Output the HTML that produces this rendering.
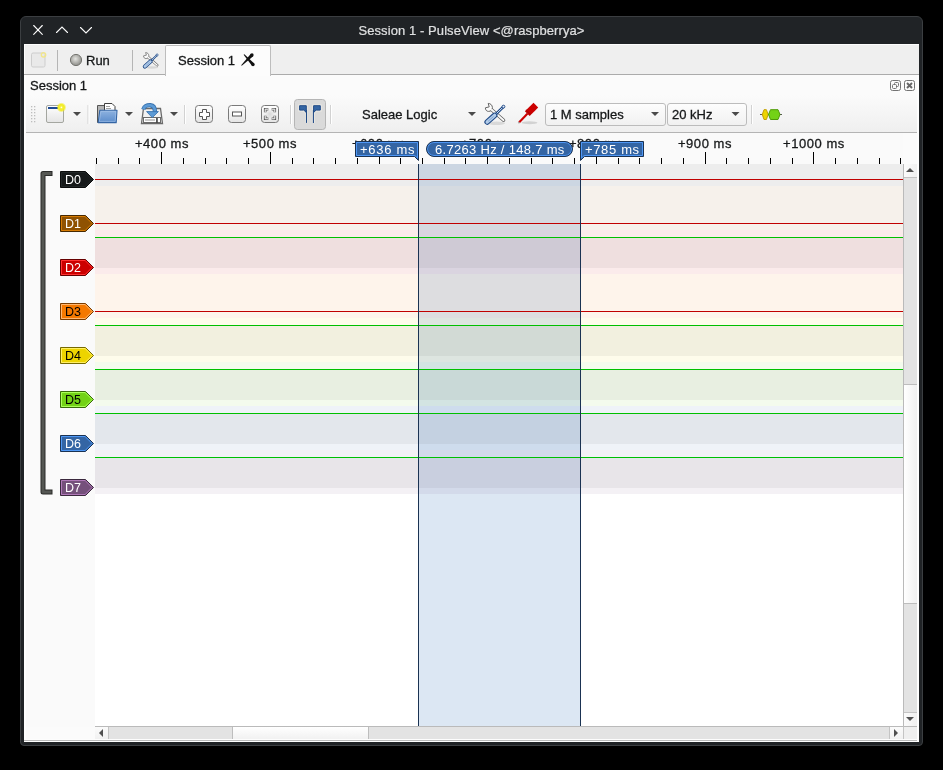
<!DOCTYPE html>
<html><head><meta charset="utf-8">
<style>
*{box-sizing:border-box}
html,body{margin:0;padding:0;width:943px;height:770px;overflow:hidden;background:#000;font-family:"Liberation Sans",sans-serif;}
.a{position:absolute;will-change:transform}
#win{left:20px;top:16px;width:903px;height:730px;background:#202326;border-radius:6px 6px 4px 4px;border:1px solid #3b3e41;}
#title{left:0px;top:22px;width:943px;text-align:center;color:#dfe0e1;font-size:13px;line-height:18px;-webkit-text-stroke:0.2px #dfe0e1;letter-spacing:0.08px}
#content{left:24px;top:44px;width:895px;height:698px;background:#fbfbfb;}
#tabbar{left:24px;top:44px;width:895px;height:31px;background:#efefef;border-bottom:1px solid #ababab;box-shadow:inset 1px 1px 0 #fdfdfd}
.sep{width:1px;background:#b5b5b5}
.t13{font-size:13px;color:#161819;line-height:16px;white-space:nowrap;-webkit-text-stroke:0.3px #161819}
#tab{left:165px;top:45px;width:106px;height:31px;background:#fcfcfc;border:1px solid #bdbdbd;border-bottom:none;border-radius:2px 2px 0 0}
#toolbar{left:26px;top:95px;width:891px;height:38px;background:linear-gradient(#fbfbfb,#efefef);border-bottom:1px solid #b4b4b4}
#ruler{left:95px;top:133px;width:808px;height:31px;background:#fafafa}
#header{left:24px;top:133px;width:71px;height:594px;background:#fafafa}
.combo{height:23px;border:1px solid #bcbcbc;border-radius:3px;background:linear-gradient(#fdfdfd,#f1f1f1)}
.rt{font-size:13px;color:#161819;letter-spacing:0.55px;white-space:nowrap;line-height:16px;-webkit-text-stroke:0.3px #161819}
.lbl{font-size:13px;color:#fff;letter-spacing:0.3px;white-space:nowrap;line-height:16px;-webkit-text-stroke:0px #fff}

</style></head><body>
<svg width="0" height="0" style="position:absolute"><defs>
<symbol id="tools" viewBox="0 0 26 26">
 <ellipse cx="14.5" cy="23.2" rx="8.5" ry="1.7" fill="#000" opacity="0.10"/>
 <path d="M8.8 9 L21.6 20.2" stroke="#5e5e5e" stroke-width="3.4" stroke-linecap="round"/>
 <path d="M8.8 9 L21.6 20.2" stroke="#fbfbfb" stroke-width="1.8" stroke-linecap="round"/>
 <path d="M3.4 7.8 L7.2 6.9 L6.2 3.4 C8.4 3.4 10.4 5.2 10.4 7.6 C10.4 10 8.6 11.4 6.6 11.4 C4.6 11.4 3.3 9.8 3.4 7.8 Z" fill="#fbfbfb" stroke="#5e5e5e" stroke-width="0.95" stroke-linejoin="round"/>
 <path d="M9.2 9.4 L10.6 10.6" stroke="#fbfbfb" stroke-width="1.9"/>
 <path d="M21.4 6.8 L13 15" stroke="#204a87" stroke-width="2.7" stroke-linecap="round"/>
 <path d="M21.4 6.8 L13 15" stroke="#d2e2f5" stroke-width="1.0" stroke-linecap="round"/>
 <circle cx="21.5" cy="6.6" r="1.4" fill="#e8f0fa" stroke="#204a87" stroke-width="0.9"/>
 <path d="M12.6 15.4 L5.2 22" stroke="#204a87" stroke-width="5.6" stroke-linecap="round"/>
 <path d="M12.6 15.4 L5.2 22" stroke="#b3cdea" stroke-width="3.4" stroke-linecap="round"/>
 <path d="M11.2 16.8 L6.6 20.8" stroke="#7aa0cf" stroke-width="0.9" stroke-linecap="round"/>
</symbol>
</defs></svg>
<div id="win" class="a"></div>
<div id="title" class="a">Session 1 - PulseView &lt;@raspberrya&gt;</div>
<svg class="a" style="left:0;top:0" width="100" height="44">
 <g stroke="#fcfcfc" stroke-width="1.1" fill="none" stroke-linecap="round">
  <path d="M33.7 25.5 L42.3 34.3 M42.3 25.5 L33.7 34.3"/>
  <path d="M56.5 32.5 L62 27 L67.5 32.5"/>
  <path d="M80.5 27.5 L86 33 L91.5 27.5"/>
 </g>
</svg>
<div id="content" class="a"></div>
<div id="tabbar" class="a"></div>
<div id="tab" class="a"></div>
<div class="a t13" style="left:178px;top:53px">Session 1</div>
<svg class="a" style="left:238px;top:50px" width="20" height="20"><g fill="#111">
<path d="M5.6 4.8 L6.4 4.2 L16.2 13.4 L13.8 15.6 Z"/><circle cx="15" cy="14.5" r="1.65"/>
<path d="M15.15 6.15 L12.85 3.85 L3.2 15.2 L3.8 15.8 Z"/><circle cx="14" cy="5" r="1.65"/>
</g></svg>
<svg class="a" style="left:30px;top:51px" width="18" height="18"><rect x="1.5" y="2" width="13.5" height="14" rx="1.5" fill="#e9e9e9" stroke="#cdcdcd"/><circle cx="13.5" cy="3.8" r="2.2" fill="none" stroke="#f2e68a" stroke-width="1.3"/></svg>
<div class="a sep" style="left:57px;top:50px;height:21px"></div>
<svg class="a" style="left:68px;top:52px" width="16" height="16"><defs><radialGradient id="rb" cx="0.45" cy="0.4" r="0.6"><stop offset="0" stop-color="#e4e4e0"/><stop offset="1" stop-color="#8c8c88"/></radialGradient></defs><circle cx="8" cy="8" r="5.6" fill="url(#rb)" stroke="#74746f" stroke-width="1"/></svg>
<div class="a t13" style="left:86px;top:53px">Run</div>
<div class="a sep" style="left:132px;top:50px;height:21px"></div>
<svg class="a" style="left:141px;top:49.5px" width="19.5" height="19.5" viewBox="0 0 26 26"><use href="#tools"/></svg>
<div class="a t13" style="left:30px;top:78px">Session 1</div>
<svg class="a" style="left:889px;top:79px" width="28" height="13">
 <rect x="1.5" y="1.5" width="10" height="10" rx="2" fill="none" stroke="#737373"/>
 <rect x="5.5" y="3.5" width="4" height="4" rx="1" fill="#fafafa" stroke="#737373"/>
 <rect x="3.5" y="5.5" width="4" height="4" rx="1" fill="#fafafa" stroke="#737373"/>
 <rect x="15.5" y="1.5" width="10" height="10" rx="2" fill="none" stroke="#737373"/>
 <path d="M18 4 L23 9 M23 4 L18 9" stroke="#666" stroke-width="1.9"/>
</svg>
<div id="toolbar" class="a"></div>
<div id="ruler" class="a"></div>
<div id="header" class="a"></div>
<!-- toolbar -->
<svg class="a" style="left:24px;top:96px" width="800" height="36">
 <g fill="#bdbdbd">
  <rect x="7" y="10" width="1.3" height="1.3"/><rect x="10" y="10" width="1.3" height="1.3"/>
  <rect x="7" y="13" width="1.3" height="1.3"/><rect x="10" y="13" width="1.3" height="1.3"/>
  <rect x="7" y="16" width="1.3" height="1.3"/><rect x="10" y="16" width="1.3" height="1.3"/>
  <rect x="7" y="19" width="1.3" height="1.3"/><rect x="10" y="19" width="1.3" height="1.3"/>
  <rect x="7" y="22" width="1.3" height="1.3"/><rect x="10" y="22" width="1.3" height="1.3"/>
  <rect x="7" y="25" width="1.3" height="1.3"/><rect x="10" y="25" width="1.3" height="1.3"/>
 </g>
 <defs>
  <linearGradient id="gw" x1="0" y1="0" x2="0" y2="1"><stop offset="0" stop-color="#ffffff"/><stop offset="1" stop-color="#e4e4e4"/></linearGradient>
  <linearGradient id="gb" x1="0" y1="0" x2="0" y2="1"><stop offset="0" stop-color="#8fb3e0"/><stop offset="1" stop-color="#5b8ccb"/></linearGradient>
  <radialGradient id="gy"><stop offset="0" stop-color="#ffffff"/><stop offset="0.25" stop-color="#f6f040"/><stop offset="0.6" stop-color="#f2ec1a" stop-opacity="0.95"/><stop offset="1" stop-color="#f2ec1a" stop-opacity="0"/></radialGradient>
 </defs>
 <!-- new -->
 <rect x="22.5" y="9.5" width="17" height="17" rx="1.5" fill="url(#gw)" stroke="#a4a6a0"/>
 <rect x="24" y="11" width="10" height="2" fill="#1f4a94"/>
 <circle cx="37.4" cy="11.4" r="5" fill="url(#gy)"/>
 <!-- arrows -->
 <g fill="#4a4a4a">
  <path d="M49 16 H57 L53 20 Z"/>
  <path d="M101 16 H109 L105 20 Z"/>
  <path d="M146 16 H154 L150 20 Z"/>
 </g>
 <!-- seps -->
 <g fill="#d2d2d2">
  <rect x="63.5" y="9" width="1" height="19"/>
  <rect x="160" y="9" width="1" height="19"/>
  <rect x="266" y="9" width="1" height="19"/>
  <rect x="306" y="9" width="1" height="19"/>
  <rect x="727" y="9" width="1" height="19"/>
 </g>
 <g fill="#ffffff">
  <rect x="64.5" y="9" width="1" height="19"/>
  <rect x="161" y="9" width="1" height="19"/>
  <rect x="267" y="9" width="1" height="19"/>
  <rect x="307" y="9" width="1" height="19"/>
  <rect x="728" y="9" width="1" height="19"/>
 </g>
 <!-- open -->
 <path d="M73.5 26.5 V9.5 H81 V26.5 Z" fill="#b4b4b4" stroke="#555" stroke-width="1"/>
 <path d="M80.5 15 V7.5 H88 L91 10.5 V15" fill="#fff" stroke="#3e3e3e"/>
 <rect x="82" y="10" width="4" height="0.9" fill="#999"/><rect x="82" y="12" width="5" height="0.9" fill="#999"/>
 <path d="M75.8 14.2 H93 L92.2 26.6 H74.2 Z" fill="url(#gb)" stroke="#3465a4" stroke-width="1.1" stroke-linejoin="round"/>
 <path d="M76.8 15.4 H91.8 L91.2 25.4 H75.4 Z" fill="none" stroke="#a9c6ea" stroke-width="0.7" opacity="0.8"/>
 <!-- save -->
 <path d="M119.5 12.5 H136.5 L138.5 27.5 H117.5 Z" fill="#f2f2f2" stroke="#6a6a6a" stroke-width="1.3"/>
 <rect x="119.5" y="21.5" width="17" height="5" fill="#fff" stroke="#6a6a6a"/>
 <rect x="121" y="23" width="10" height="2" fill="#c8c8c8"/>
 <rect x="132.3" y="22" width="1.3" height="4.5" fill="#111"/>
 <path d="M119.4 13.4 C119.8 10.4 123 9 126.4 9.2 C129.6 9.5 131 11.8 131 16" stroke="#3a74b0" stroke-width="4.4" fill="none"/>
 <path d="M119.4 13.4 C119.8 10.4 123 9 126.4 9.2 C129.6 9.5 131 11.8 131 16" stroke="#5d9bd6" stroke-width="2.6" fill="none"/>
 <path d="M122.6 15.6 H134.4 L128.3 21.6 Z" fill="#5d9bd6" stroke="#3a74b0" stroke-width="0.9" stroke-linejoin="round"/>
 <!-- zoom buttons -->
 <g stroke="#7a7a7a" fill="url(#gw)">
  <rect x="171.5" y="9.5" width="17" height="17" rx="3"/>
  <rect x="204.5" y="9.5" width="17" height="17" rx="3"/>
  <rect x="237.5" y="9.5" width="17" height="17" rx="3"/>
 </g>
 <path d="M178.5 13.5 H182.5 V16.5 H185.5 V20.5 H182.5 V23.5 H178.5 V20.5 H175.5 V16.5 H178.5 Z" fill="#fff" stroke="#555" stroke-width="1"/>
 <rect x="208.5" y="16" width="9" height="4" fill="#fff" stroke="#555" stroke-width="1"/>
 <radialGradient id="gf"><stop offset="0" stop-color="#d8d8d8"/><stop offset="1" stop-color="#d8d8d8" stop-opacity="0"/></radialGradient>
 <circle cx="246" cy="18" r="5" fill="url(#gf)"/>
 <g fill="none" stroke="#5a5a5a" stroke-width="2.6" stroke-linejoin="miter">
  <path d="M241.2 16.3 V13.2 H244.3"/><path d="M247.7 13.2 H250.8 V16.3"/><path d="M241.2 19.7 V22.8 H244.3"/><path d="M247.7 22.8 H250.8 V19.7"/>
 </g>
 <g fill="none" stroke="#fff" stroke-width="1" stroke-linejoin="miter">
  <path d="M241.2 16 V13.2 H244"/><path d="M248 13.2 H250.8 V16"/><path d="M241.2 20 V22.8 H244"/><path d="M248 22.8 H250.8 V20"/>
 </g>
 <!-- pressed cursor button -->
 <rect x="270.5" y="3.5" width="31" height="30" rx="3" fill="#dadada" stroke="#b5b5b5"/>
 <g fill="none" stroke="#f3f0e6" stroke-width="2.6" opacity="0.8">
  <path d="M275.6 9.7 H282.3 V16.5 L279.8 14.1 H275.6 Z"/><path d="M282.5 14 V26.9"/>
  <path d="M296.3 9.7 H289.6 V16.5 L292.1 14.1 H296.3 Z"/><path d="M289.4 14 V26.9"/>
 </g>
 <g fill="#3465a4" stroke="#204a87" stroke-width="1">
  <path d="M275.6 9.7 H282.3 V16.5 L279.8 14.1 H275.6 Z"/>
  <path d="M296.3 9.7 H289.6 V16.5 L292.1 14.1 H296.3 Z"/>
 </g>
 <g stroke="#204a87" stroke-width="1.1">
  <path d="M282.5 14 V26.9"/><path d="M289.4 14 V26.9"/>
 </g>
 <use href="#tools" x="458" y="4" width="26" height="26"/>
 <!-- probe -->
 <ellipse cx="505.5" cy="26.8" rx="8" ry="1.5" fill="#000" opacity="0.13"/>
 <path d="M495 26.4 L503.6 17.4" stroke="#cc0000" stroke-width="2.1" stroke-linecap="butt"/>
 <path d="M509.5 6.8 L514.2 11.5 L507.4 18.3 L502.7 13.6 Z" fill="#cc0000"/>
 <path d="M507.73 17.73 L502.97 13.11 L500.87 15.27 L505.63 19.89 Z" fill="#c00000"/>
 <path d="M501.9 14.2 L506.7 18.8" stroke="#a00000" stroke-width="0.6"/>
 <circle cx="494.8" cy="26.6" r="0.9" fill="#a8b0b0"/>
 <!-- decoder icon -->
 <path d="M736 18.5 H758" stroke="#555" stroke-width="1"/>
 <path d="M738.3 18.5 L740 13.7 H742.4 L744.1 18.5 L742.4 23.5 H740 Z" fill="#edd400" stroke="#c4a000" stroke-width="1"/>
 <path d="M744.5 18.5 L746.5 13.7 H754 L756 18.5 L754 23.5 H746.5 Z" fill="#73d216" stroke="#4e9a06" stroke-width="1"/>
</svg>
<div class="a t13" style="left:362px;top:107px">Saleae Logic</div>
<svg class="a" style="left:460px;top:106px" width="20" height="14"><path d="M8 6 H16 L12 10 Z" fill="#4a4a4a"/></svg>
<div class="a combo" style="left:545px;top:103px;width:121px"></div>
<div class="a t13" style="left:550px;top:107px">1 M samples</div>
<svg class="a" style="left:640px;top:106px" width="20" height="14"><path d="M11 6 H19 L15 10 Z" fill="#4a4a4a"/></svg>
<div class="a combo" style="left:667px;top:103px;width:80px"></div>
<div class="a t13" style="left:672px;top:107px">20 kHz</div>
<svg class="a" style="left:720px;top:106px" width="20" height="14"><path d="M11.5 6 H19.5 L15.5 10 Z" fill="#4a4a4a"/></svg>
<div class="a" style="left:95px;top:164px;width:808px;height:562px;background:#fff;overflow:hidden"><div class="a" style="left:323px;top:0px;width:162px;height:562px;background:#dce7f3;"></div><div class="a" style="left:0px;top:0px;width:808px;height:22px;background:rgba(22,25,26,0.0784);"></div><div class="a" style="left:0px;top:22px;width:808px;height:44px;background:rgba(143,82,2,0.0784);"></div><div class="a" style="left:0px;top:66px;width:808px;height:44px;background:rgba(204,0,0,0.0784);"></div><div class="a" style="left:0px;top:74px;width:808px;height:30px;background:rgba(0,0,0,0.047);"></div><div class="a" style="left:0px;top:110px;width:808px;height:44px;background:rgba(245,121,0,0.0784);"></div><div class="a" style="left:0px;top:154px;width:808px;height:44px;background:rgba(237,212,0,0.0784);"></div><div class="a" style="left:0px;top:162px;width:808px;height:30px;background:rgba(0,0,0,0.047);"></div><div class="a" style="left:0px;top:198px;width:808px;height:44px;background:rgba(115,210,22,0.0784);"></div><div class="a" style="left:0px;top:206px;width:808px;height:30px;background:rgba(0,0,0,0.047);"></div><div class="a" style="left:0px;top:242px;width:808px;height:44px;background:rgba(52,101,164,0.0784);"></div><div class="a" style="left:0px;top:250px;width:808px;height:30px;background:rgba(0,0,0,0.047);"></div><div class="a" style="left:0px;top:286px;width:808px;height:44px;background:rgba(117,80,123,0.0784);"></div><div class="a" style="left:0px;top:294px;width:808px;height:30px;background:rgba(0,0,0,0.047);"></div><div class="a" style="left:0px;top:15px;width:808px;height:1px;background:#c00000;"></div><div class="a" style="left:0px;top:59px;width:808px;height:1px;background:#c00000;"></div><div class="a" style="left:0px;top:73px;width:808px;height:1px;background:#00c000;"></div><div class="a" style="left:0px;top:147px;width:808px;height:1px;background:#c00000;"></div><div class="a" style="left:0px;top:161px;width:808px;height:1px;background:#00c000;"></div><div class="a" style="left:0px;top:205px;width:808px;height:1px;background:#00c000;"></div><div class="a" style="left:0px;top:249px;width:808px;height:1px;background:#00c000;"></div><div class="a" style="left:0px;top:293px;width:808px;height:1px;background:#00c000;"></div><div class="a" style="left:323px;top:0px;width:1px;height:562px;background:#1a3252;"></div><div class="a" style="left:485px;top:0px;width:1px;height:562px;background:#1a3252;"></div></div>
<svg class="a" style="left:58px;top:169px" width="40" height="21"><path d="M2.5 2.5 H27.5 L35.5 10.5 L27.5 18.5 H2.5 Z" fill="#16191a"/><path d="M3.5 3.5 H27.1 L34.1 10.5 L27.1 17.5 H3.5 Z" fill="none" stroke="#212627" stroke-width="1"/><path d="M2.5 2.5 H27.5 L35.5 10.5 L27.5 18.5 H2.5 Z" fill="none" stroke="#0b0c0d" stroke-width="1"/><text x="15" y="14.6" text-anchor="middle" font-family="Liberation Sans" font-size="12.5" fill="#fff">D0</text></svg>
<svg class="a" style="left:58px;top:213px" width="40" height="21"><path d="M2.5 2.5 H27.5 L35.5 10.5 L27.5 18.5 H2.5 Z" fill="#8f5202"/><path d="M3.5 3.5 H27.1 L34.1 10.5 L27.1 17.5 H3.5 Z" fill="none" stroke="#d67b03" stroke-width="1"/><path d="M2.5 2.5 H27.5 L35.5 10.5 L27.5 18.5 H2.5 Z" fill="none" stroke="#472901" stroke-width="1"/><text x="15" y="14.6" text-anchor="middle" font-family="Liberation Sans" font-size="12.5" fill="#fff">D1</text></svg>
<svg class="a" style="left:58px;top:257px" width="40" height="21"><path d="M2.5 2.5 H27.5 L35.5 10.5 L27.5 18.5 H2.5 Z" fill="#cc0000"/><path d="M3.5 3.5 H27.1 L34.1 10.5 L27.1 17.5 H3.5 Z" fill="none" stroke="#ff3333" stroke-width="1"/><path d="M2.5 2.5 H27.5 L35.5 10.5 L27.5 18.5 H2.5 Z" fill="none" stroke="#660000" stroke-width="1"/><text x="15" y="14.6" text-anchor="middle" font-family="Liberation Sans" font-size="12.5" fill="#fff">D2</text></svg>
<svg class="a" style="left:58px;top:301px" width="40" height="21"><path d="M2.5 2.5 H27.5 L35.5 10.5 L27.5 18.5 H2.5 Z" fill="#f57900"/><path d="M3.5 3.5 H27.1 L34.1 10.5 L27.1 17.5 H3.5 Z" fill="none" stroke="#ffb770" stroke-width="1"/><path d="M2.5 2.5 H27.5 L35.5 10.5 L27.5 18.5 H2.5 Z" fill="none" stroke="#7a3c00" stroke-width="1"/><text x="15" y="14.6" text-anchor="middle" font-family="Liberation Sans" font-size="12.5" fill="#000">D3</text></svg>
<svg class="a" style="left:58px;top:345px" width="40" height="21"><path d="M2.5 2.5 H27.5 L35.5 10.5 L27.5 18.5 H2.5 Z" fill="#edd400"/><path d="M3.5 3.5 H27.1 L34.1 10.5 L27.1 17.5 H3.5 Z" fill="none" stroke="#ffef64" stroke-width="1"/><path d="M2.5 2.5 H27.5 L35.5 10.5 L27.5 18.5 H2.5 Z" fill="none" stroke="#766a00" stroke-width="1"/><text x="15" y="14.6" text-anchor="middle" font-family="Liberation Sans" font-size="12.5" fill="#000">D4</text></svg>
<svg class="a" style="left:58px;top:389px" width="40" height="21"><path d="M2.5 2.5 H27.5 L35.5 10.5 L27.5 18.5 H2.5 Z" fill="#73d216"/><path d="M3.5 3.5 H27.1 L34.1 10.5 L27.1 17.5 H3.5 Z" fill="none" stroke="#aaff57" stroke-width="1"/><path d="M2.5 2.5 H27.5 L35.5 10.5 L27.5 18.5 H2.5 Z" fill="none" stroke="#39690b" stroke-width="1"/><text x="15" y="14.6" text-anchor="middle" font-family="Liberation Sans" font-size="12.5" fill="#000">D5</text></svg>
<svg class="a" style="left:58px;top:433px" width="40" height="21"><path d="M2.5 2.5 H27.5 L35.5 10.5 L27.5 18.5 H2.5 Z" fill="#3465a4"/><path d="M3.5 3.5 H27.1 L34.1 10.5 L27.1 17.5 H3.5 Z" fill="none" stroke="#4e98f6" stroke-width="1"/><path d="M2.5 2.5 H27.5 L35.5 10.5 L27.5 18.5 H2.5 Z" fill="none" stroke="#1a3252" stroke-width="1"/><text x="15" y="14.6" text-anchor="middle" font-family="Liberation Sans" font-size="12.5" fill="#fff">D6</text></svg>
<svg class="a" style="left:58px;top:477px" width="40" height="21"><path d="M2.5 2.5 H27.5 L35.5 10.5 L27.5 18.5 H2.5 Z" fill="#75507b"/><path d="M3.5 3.5 H27.1 L34.1 10.5 L27.1 17.5 H3.5 Z" fill="none" stroke="#b078b8" stroke-width="1"/><path d="M2.5 2.5 H27.5 L35.5 10.5 L27.5 18.5 H2.5 Z" fill="none" stroke="#3a283d" stroke-width="1"/><text x="15" y="14.6" text-anchor="middle" font-family="Liberation Sans" font-size="12.5" fill="#fff">D7</text></svg>
<svg class="a" style="left:36px;top:166px" width="22" height="334"><path d="M14 7.5 H7 V326 H14" fill="none" stroke="#2a2b29" stroke-width="5" stroke-linecap="square" stroke-linejoin="round"/><path d="M14 7.5 H7 V326 H14" fill="none" stroke="#555753" stroke-width="3" stroke-linecap="square" stroke-linejoin="round"/></svg>
<svg class="a" style="left:95px;top:133px" width="808" height="31"><rect x="1" y="25" width="1" height="6" fill="#000"/><rect x="23" y="25" width="1" height="6" fill="#000"/><rect x="44" y="25" width="1" height="6" fill="#000"/><rect x="66" y="19" width="1" height="12" fill="#000"/><rect x="88" y="25" width="1" height="6" fill="#000"/><rect x="110" y="25" width="1" height="6" fill="#000"/><rect x="131" y="25" width="1" height="6" fill="#000"/><rect x="153" y="25" width="1" height="6" fill="#000"/><rect x="175" y="19" width="1" height="12" fill="#000"/><rect x="197" y="25" width="1" height="6" fill="#000"/><rect x="218" y="25" width="1" height="6" fill="#000"/><rect x="240" y="25" width="1" height="6" fill="#000"/><rect x="262" y="25" width="1" height="6" fill="#000"/><rect x="284" y="19" width="1" height="12" fill="#000"/><rect x="305" y="25" width="1" height="6" fill="#000"/><rect x="327" y="25" width="1" height="6" fill="#000"/><rect x="349" y="25" width="1" height="6" fill="#000"/><rect x="370" y="25" width="1" height="6" fill="#000"/><rect x="392" y="19" width="1" height="12" fill="#000"/><rect x="414" y="25" width="1" height="6" fill="#000"/><rect x="436" y="25" width="1" height="6" fill="#000"/><rect x="457" y="25" width="1" height="6" fill="#000"/><rect x="479" y="25" width="1" height="6" fill="#000"/><rect x="501" y="19" width="1" height="12" fill="#000"/><rect x="523" y="25" width="1" height="6" fill="#000"/><rect x="544" y="25" width="1" height="6" fill="#000"/><rect x="566" y="25" width="1" height="6" fill="#000"/><rect x="588" y="25" width="1" height="6" fill="#000"/><rect x="610" y="19" width="1" height="12" fill="#000"/><rect x="631" y="25" width="1" height="6" fill="#000"/><rect x="653" y="25" width="1" height="6" fill="#000"/><rect x="675" y="25" width="1" height="6" fill="#000"/><rect x="697" y="25" width="1" height="6" fill="#000"/><rect x="718" y="19" width="1" height="12" fill="#000"/><rect x="740" y="25" width="1" height="6" fill="#000"/><rect x="762" y="25" width="1" height="6" fill="#000"/><rect x="784" y="25" width="1" height="6" fill="#000"/><rect x="805" y="25" width="1" height="6" fill="#000"/></svg>
<div class="a rt" style="left:111.6px;top:136px;width:100px;text-align:center">+400 ms</div>
<div class="a rt" style="left:220.3px;top:136px;width:100px;text-align:center">+500 ms</div>
<div class="a rt" style="left:329.0px;top:136px;width:100px;text-align:center">+600 ms</div>
<div class="a rt" style="left:437.7px;top:136px;width:100px;text-align:center">+700 ms</div>
<div class="a rt" style="left:546.4px;top:136px;width:100px;text-align:center">+800 ms</div>
<div class="a rt" style="left:655.1px;top:136px;width:100px;text-align:center">+900 ms</div>
<div class="a rt" style="left:763.8px;top:136px;width:100px;text-align:center">+1000 ms</div>
<!-- cursor labels -->
<svg class="a" style="left:350px;top:136px" width="300" height="30">
 <g fill="#3465a4">
 <path d="M5.5 5.5 H68.5 V24.5 L64.5 20.5 H5.5 Z"/>
 <rect x="76.5" y="5.5" width="146" height="15" rx="7.5"/>
 <path d="M230.5 24.5 V5.5 H293.5 V20.5 H234.5 Z"/>
 </g>
 <g fill="none" stroke="#4e97f6" stroke-width="1">
 <path d="M6.5 6.5 H67.5 V22 L64.9 19.5 H6.5 Z"/>
 <rect x="77.5" y="6.5" width="144" height="13" rx="6.5"/>
 <path d="M231.5 22 V6.5 H292.5 V19.5 H234.1 Z"/>
 </g>
 <g fill="none" stroke="#1a3252" stroke-width="1">
 <path d="M5.5 5.5 H68.5 V24.5 L64.5 20.5 H5.5 Z"/>
 <rect x="76.5" y="5.5" width="146" height="15" rx="7.5"/>
 <path d="M230.5 24.5 V5.5 H293.5 V20.5 H234.5 Z"/>
 </g>
</svg>
<div class="a lbl" style="left:360px;top:142px;letter-spacing:0.7px">+636 ms</div>
<div class="a lbl" style="left:435px;top:142px">6.7263 Hz / 148.7 ms</div>
<div class="a lbl" style="left:585px;top:142px;letter-spacing:0.65px">+785 ms</div>
<!-- scrollbars -->
<div class="a" style="left:95px;top:726px;width:808px;height:15px;background:#e3e3e3;border-top:1px solid #bababa;border-bottom:1px solid #bababa"></div>
<div class="a" style="left:95px;top:727px;width:14px;height:13px;background:linear-gradient(#fbfbfb,#f0f0f0);border-right:1px solid #c4c4c4"></div>
<svg class="a" style="left:95px;top:726px" width="14" height="14"><path d="M4 7 L8 3 V11 Z" fill="#505050"/></svg>
<div class="a" style="left:232px;top:727px;width:137px;height:13px;background:linear-gradient(#ffffff,#f0f0f0);border-left:1px solid #bdbdbd;border-right:1px solid #bdbdbd"></div>
<div class="a" style="left:889px;top:727px;width:14px;height:13px;background:linear-gradient(#fbfbfb,#f0f0f0);border-left:1px solid #c4c4c4"></div>
<svg class="a" style="left:889px;top:726px" width="14" height="14"><path d="M5 3 L9 7 L5 11 Z" fill="#505050"/></svg>
<div class="a" style="left:903px;top:164px;width:14px;height:562px;background:#e3e3e3;border-left:1px solid #bababa"></div>
<div class="a" style="left:904px;top:164px;width:13px;height:14px;background:linear-gradient(90deg,#fbfbfb,#f0f0f0);border-bottom:1px solid #c4c4c4"></div>
<svg class="a" style="left:903px;top:164px" width="14" height="14"><path d="M3 8 L7 4 L11 8 Z" fill="#505050"/></svg>
<div class="a" style="left:904px;top:384px;width:13px;height:220px;background:linear-gradient(90deg,#ffffff,#f0f0f0);border-top:1px solid #bdbdbd;border-bottom:1px solid #bdbdbd"></div>
<div class="a" style="left:904px;top:712px;width:13px;height:14px;background:linear-gradient(90deg,#fbfbfb,#f0f0f0);border-top:1px solid #c4c4c4"></div>
<svg class="a" style="left:903px;top:712px" width="14" height="14"><path d="M3 5 L11 5 L7 9 Z" fill="#505050"/></svg>
<div class="a" style="left:903px;top:726px;width:14px;height:15px;background:#efefef;border-top:1px solid #bababa;border-bottom:1px solid #bababa;border-left:1px solid #c4c4c4"></div>
<div class="a" style="left:24px;top:739px;width:895px;height:1px;background:#fdfdfd"></div>
<div class="a" style="left:24px;top:740px;width:893px;height:1px;background:#bababa"></div>
<div class="a" style="left:24px;top:741px;width:895px;height:1px;background:#ffffff"></div>
<div class="a" style="left:24px;top:75px;width:2px;height:665px;background:#fefefe"></div>
<div class="a" style="left:917px;top:75px;width:2px;height:665px;background:#fefefe"></div>
</body></html>
